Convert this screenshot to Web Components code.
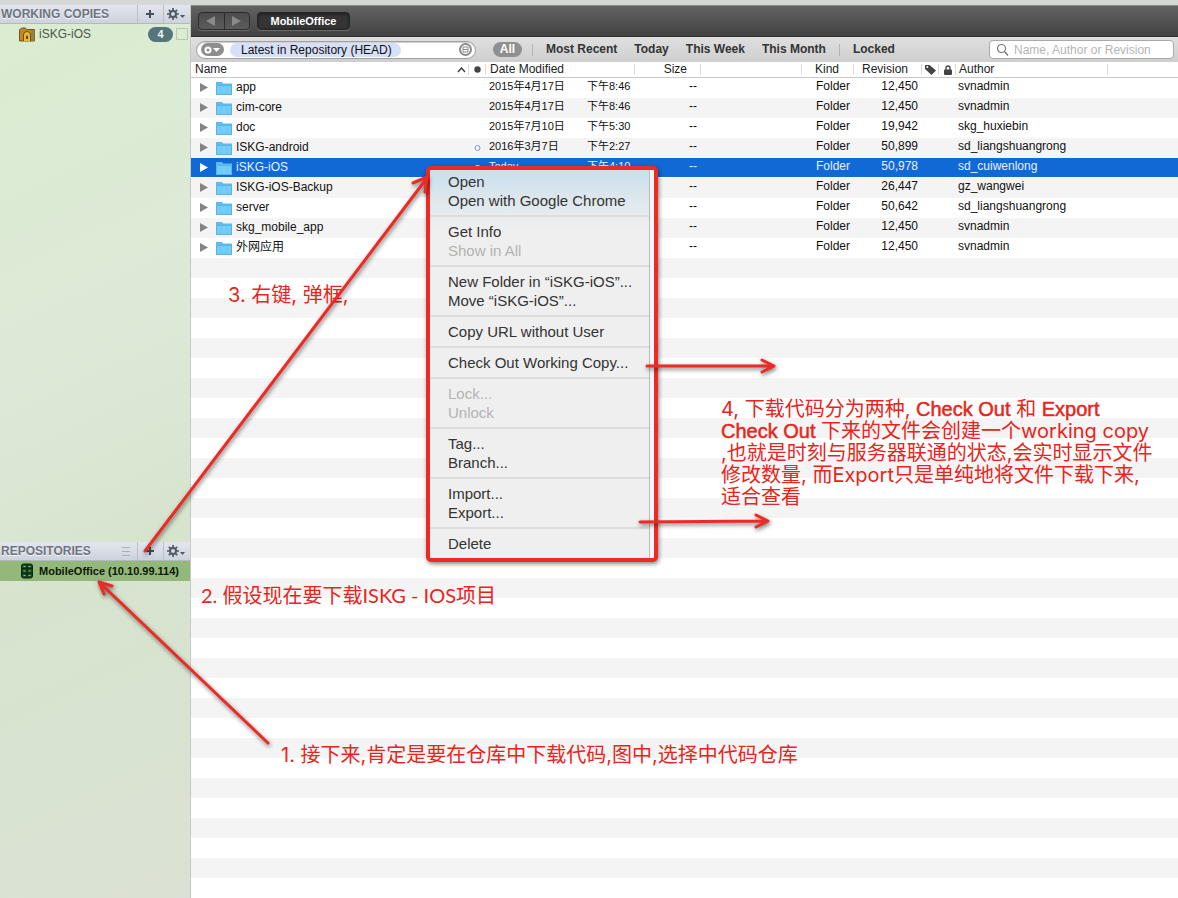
<!DOCTYPE html>
<html lang="zh-CN">
<head>
<meta charset="utf-8">
<title>MobileOffice</title>
<style>
html,body{margin:0;height:100%}
body{font:12px/16px "Liberation Sans","Noto Sans CJK SC",sans-serif;color:#111;background:#fff}
</style>
</head>
<body>
<svn-app></svn-app>
<script>
const define=(name,html,setup)=>customElements.define(name,class extends HTMLElement{
  constructor(){super();this.attachShadow({mode:'open'})}
  connectedCallback(){
    if(this.shadowRoot.childNodes.length)return;
    const t=document.createElement('template');
    t.innerHTML='<style>*{box-sizing:border-box}button{font:inherit;color:inherit;background:none;border:0;padding:0;margin:0}svg{display:block}</style>'+html;
    this.shadowRoot.append(t.content.cloneNode(true));
    if(setup)setup.call(this,this.shadowRoot);
  }
});

define('side-section',`
<style>
:host{display:flex;flex-direction:column;min-height:80px}
header{display:flex;height:19px;flex:none;padding-right:1px;border-bottom:1px solid #b4b9be;background:linear-gradient(#e3e6ee,#cdd3dc);color:#6c7580}
h2{flex:1;margin:0;padding-left:1px;font-size:12px;line-height:18px;font-weight:bold;text-shadow:0 1px #f4f6f9}
button{width:26px;padding-right:2px;display:grid;place-items:center;border-left:1px solid #b9bfc8}
.grip{width:22px;display:grid;place-items:center}
</style>
<header><h2></h2><span class="grip" hidden></span>
<button aria-label="Add"><svg width="10" height="10"><path d="M5 1v8M1 5h8" stroke="#434e5b" stroke-width="2"/></svg></button>
<button aria-label="Actions"><svg width="18" height="12"><g stroke="#4f5965" fill="none"><circle cx="6" cy="6" r="3" stroke-width="2"/><path d="M6 0v2.500M6 9.500V12M0 6h2.500M9.500 6H12M1.800 1.800l1.700 1.700M8.500 8.500l1.700 1.700M10.200 1.800L8.500 3.500M3.500 8.500l-1.700 1.700" stroke-width="1.700"/></g><path d="M13 7h5l-2.500 3z" fill="#4f5965"/></svg></button>
</header>
<slot></slot>`,function(r){
  r.querySelector('h2').textContent=this.getAttribute('heading');
  if(this.hasAttribute('grip')){
    const g=r.querySelector('.grip');g.hidden=false;
    g.innerHTML='<svg width="8" height="9"><path d="M0 .5h8M0 4.500h8M0 8.500h8" stroke="#a9b0b8"/></svg>';
  }else r.querySelector('.grip').remove();
});

define('side-item',`
<style>
:host{display:flex;align-items:center;height:20px;padding-left:19px;color:#4a5747}
:host([selected]){background:#94b77c;color:#0b1708;font-weight:bold;font-size:11px}
.icon{width:20px}
.label{flex:1;white-space:nowrap}
</style>
<span class="icon"><slot name="icon"></slot></span><span class="label"><slot></slot></span><slot name="end"></slot>`);

define('side-bar',`
<style>
:host{display:flex;flex-direction:column;background:linear-gradient(155deg,#dbecd0 0,#dde9d8 40%,#d6e4ce 62%,#dbe2d5 100%);border-right:1px solid #c3ccbf}
side-section:first-of-type{flex:537 1 0}
side-section:last-of-type{flex:356 1 0}
.end{display:flex;align-items:center;gap:3px;padding-right:2px}
.badge{width:25px;height:15px;border-radius:8px;background:#54757b;color:#eef5f5;font:bold 11px/15px "Liberation Sans",sans-serif;text-align:center}
input{appearance:none;width:12px;height:12px;margin:0;border:1px solid #b9c8b0;background:transparent}
</style>
<side-section heading="WORKING COPIES">
 <side-item>
  <svg slot="icon" width="16" height="15"><path d="M.5 2.500h1l1-1.500h4l1 1.500h8v11.500H.5z" fill="#b98a2c" stroke="#76571b"/><path d="M12 3h3.500v11H12z" fill="#8e8443"/><path d="M4.500 14V8a3.500 3.500 0 0 1 7 0v6" fill="#efb832" stroke="#73500f"/><path d="M7 12V9.500a1 1 0 0 1 2 0V12z" fill="#5d410d"/></svg>iSKG-iOS
  <span slot="end" class="end"><span class="badge">4</span><input type="checkbox" aria-label="Mark iSKG-iOS"></span>
 </side-item>
</side-section>
<side-section heading="REPOSITORIES" grip>
 <side-item selected>
  <svg slot="icon" width="16" height="16"><rect x="2.500" y="1" width="11" height="14" rx="2" fill="#174820" stroke="#0a2710"/><path d="M3 5.500h10M3 10h10M8 1v14" stroke="#082a0d"/><path d="M4.500 3.500h2M4.500 8h2M4.500 12.500h2M9.500 3.500h2M9.500 8h2M9.500 12.500h2" stroke="#8fc58c"/></svg>MobileOffice (10.10.99.114)
 </side-item>
</side-section>`);

define('nav-bar',`
<style>
:host{display:flex;align-items:center;gap:7px;height:32px;padding-left:7px;background:linear-gradient(#626262,#424242);border-top:1px solid #8c8c8c;border-bottom:1px solid #2e2e2e}
.pair{display:flex;width:52px;height:18px;border:1px solid #2c2c2c;border-radius:4px;background:linear-gradient(#4c4c4c,#5b5b5b);box-shadow:0 1px #6b6b6b}
.pair button{flex:1;display:grid;place-items:center}
.pair button+button{border-left:1px solid #2c2c2c}
.tab{width:93px;height:18px;border:1px solid #262626;border-radius:4px;background:#343434;box-shadow:inset 0 1px 3px #1b1b1b,0 1px #6b6b6b;color:#fff;font-weight:bold;font-size:11px;line-height:16px}
</style>
<div class="pair"><button aria-label="Back"><svg width="10" height="10"><path d="M9 0v10L0 5z" fill="#8a8a8a"/></svg></button><button aria-label="Forward"><svg width="10" height="10"><path d="M0 0v10l9-5z" fill="#8a8a8a"/></svg></button></div>
<button class="tab">MobileOffice</button>`);

define('filter-bar',`
<style>
:host{display:flex;align-items:center;height:25px;padding:0 4px 0 5px;background:linear-gradient(#dfdfdf,#cfcfcf);color:#333;font-weight:bold}
.scope{display:flex;align-items:center;width:280px;height:18px;padding:0 3px 0 4px;border:1px solid #a2a2a2;border-radius:9px;background:#fff;box-shadow:inset 0 1px 1px #ccc}
.gear{width:23px;height:13px;border-radius:7px;background:#8e8e8e;display:grid;place-items:center}
.token{height:14px;margin-left:6px;padding:0 9px 0 11px;border-radius:7px;background:#d6e0f8;color:#111;font-weight:normal;line-height:14px;white-space:nowrap}
.list{margin-left:auto}
i{width:1px;height:12px;background:#b3b3b3}
nav{display:flex;align-items:center;white-space:nowrap;flex:1;line-height:15px}
nav i{margin:0 13px 0 10px}
nav i:last-of-type{margin:0 13px}
nav button{margin-right:17px}
nav button.last{margin:0}
nav button.all{width:29px;height:15px;margin:0 0 0 17px;border-radius:8px;background:#8f8f8f;color:#fff}
label{display:flex;align-items:center;gap:5px;width:185px;height:19px;padding:0 6px;border:1px solid #a9a9a9;border-radius:4px;background:#fff}
input{flex:1;min-width:0;border:0;outline:0;padding:0;background:none;font:12px "Liberation Sans",sans-serif}
input::placeholder{color:#b5b5b5;opacity:1}
</style>
<div class="scope"><button class="gear" aria-label="Scope"><svg width="17" height="8"><circle cx="4" cy="4" r="2.500" fill="none" stroke="#fff" stroke-width="2"/><path d="M9 2h7l-3.500 4z" fill="#fff"/></svg></button><button class="token">Latest in Repository (HEAD)</button><button class="list" aria-label="Revisions"><svg width="13" height="13"><circle cx="6.500" cy="6.500" r="5.500" fill="#fff" stroke="#8b8b8b" stroke-width="2"/><path d="M4 4h5v5H4zM4 6.500h5" fill="none" stroke="#8b8b8b"/></svg></button></div>
<nav><button class="all">All</button><i></i><button>Most Recent</button><button>Today</button><button>This Week</button><button class="last">This Month</button><i></i><button>Locked</button></nav>
<label><svg width="13" height="13"><circle cx="5.500" cy="5.500" r="4" fill="none" stroke="#777" stroke-width="1.200"/><path d="M8.500 8.500l3.500 4" stroke="#777" stroke-width="1.400"/></svg><input aria-label="Search" placeholder="Name, Author or Revision"></label>`);

const rows=[
['app','','2015年4月17日','下午8:46','12,450','svnadmin'],
['cim-core','','2015年4月17日','下午8:46','12,450','svnadmin'],
['doc','','2015年7月10日','下午5:30','19,942','skg_huxiebin'],
['ISKG-android','open','2016年3月7日','下午2:27','50,899','sd_liangshuangrong'],
['iSKG-iOS','dot','Today','下午4:10','50,978','sd_cuiwenlong'],
['ISKG-iOS-Backup','','','','26,447','gz_wangwei'],
['server','','','','50,642','sd_liangshuangrong'],
['skg_mobile_app','','','','12,450','svnadmin'],
['外网应用','','','','12,450','svnadmin']];
define('repo-table',`
<style>
:host{display:block;flex:1;background:repeating-linear-gradient(#fff 0 20px,#f4f4f4 20px 40px) 0 16px}
table{width:100%;border-collapse:separate;border-spacing:0;table-layout:fixed;line-height:15px}
th,td{padding:0;text-align:left;white-space:nowrap;font-weight:normal}
thead tr{height:16px;background:#fff}
th{height:16px;border-bottom:1px solid #c9c9c9;color:#222;background:linear-gradient(#ddd,#ddd) right center/1px 11px no-repeat}
th:last-child{background:none}
tbody tr{height:20px}
td{vertical-align:top;padding-top:1px}
.sel td{background:#1169d6;border-bottom:1px solid #fff;color:#e8f1ff}
.name{padding-left:4px}
.name span{display:flex;justify-content:space-between;align-items:center;padding-right:3px}
.item{display:flex;align-items:center;height:19px;padding-left:9px}
.item svg:first-child{margin-right:8px}
.item svg:nth-child(2){margin-right:4px}
.c{text-align:center}.c svg{margin:auto}
th.date{padding-left:4px}
td.date{padding-left:3px;font-size:11px}
td.date span{display:inline-block;width:98px}
.size{text-align:right;padding-right:14px}
td.size{padding-right:4px}
.kind{padding-left:13px}
td.kind{padding-left:14px}
.rev{text-align:right;padding-right:14px}
td.rev{padding-right:4px}
th.author{padding-left:3px}
td.author{padding-left:2px}
</style>
<table>
<colgroup><col style="width:278px"><col style="width:17px"><col style="width:149px"><col style="width:66px"><col style="width:101px"><col style="width:52px"><col style="width:68px"><col style="width:17px"><col style="width:17px"><col style="width:152px"><col></colgroup>
<thead><tr><th class="name"><span>Name<svg width="9" height="6"><path d="M1 5l3.500-4L8 5" fill="none" stroke="#444" stroke-width="1.500"/></svg></span></th>
<th class="c" aria-label="Status"><svg width="7" height="7"><circle cx="3.500" cy="3.500" r="3.200" fill="#444"/></svg></th>
<th class="date">Date Modified</th><th class="size">Size</th><th></th><th class="kind">Kind</th><th class="rev">Revision</th>
<th class="c" aria-label="Tags"><svg width="11" height="11"><path d="M0 1h4.500L11 6.500 6.500 11 0 5z" fill="#444"/><circle cx="2.300" cy="3" r="1" fill="#fff"/></svg></th>
<th class="c" aria-label="Lock"><svg width="8" height="10"><path d="M2 5V3a2 2 0 0 1 4 0v2" fill="none" stroke="#444" stroke-width="1.400"/><rect y="4.500" width="8" height="5.500" rx="1" fill="#444"/></svg></th>
<th class="author">Author</th><th></th></tr></thead>
<tbody></tbody></table>`,function(r){
  r.querySelector('tbody').innerHTML=rows.map(([n,s,d,t,v,a])=>{
    const sel=n==='iSKG-iOS';
    const mark=s==='open'?'<svg width="7" height="18"><circle cx="3.500" cy="9" r="2.500" fill="none" stroke="#8b8fd0"/></svg>':s==='dot'?'<svg width="7" height="18"><circle cx="3.500" cy="9" r="3" fill="#d5e6ff"/></svg>':'';
    return `<tr class="${sel?'sel':''}"><td style="padding-top:0"><div class="item"><svg width="8" height="9"><path d="M0 0v9l8-4.500z" fill="${sel?'#fff':'#848484'}"/></svg><svg width="16" height="14"><path d="M0 1h6l1 1.500h9V14H0z" fill="#5cbcee"/><path d="M.5 4.500h15v9H.5z" fill="#71cdf8" stroke="#58b5e6"/></svg>${n}</div></td><td class="c">${mark}</td><td class="date"><span>${d}</span>${t}</td><td class="size">--</td><td></td><td class="kind">Folder</td><td class="rev">${v}</td><td></td><td></td><td class="author">${a}</td><td></td></tr>`;
  }).join('');
});

define('context-menu',`
<style>
:host{display:block;border:4px solid #ee2a24;border-radius:5px;background:#f3f5f6;box-shadow:1px 2px 4px #0007;padding-right:4px;color:#333;font-size:15px;line-height:19px}
[role=menu]{padding:2px 0 5px;background:linear-gradient(#c8dfee 0,#dde7ec 28px,#efefef 60px);border-right:1px solid #b5bcc6}
button{display:block;width:100%;height:19px;padding-left:18px;text-align:left;white-space:nowrap}
button:disabled{color:#b3b3b3}
hr{height:2px;margin:5px 0;border:0;background:#dcdcdc}
</style>
<div role="menu"></div>`,function(r){
  const groups=[['Open','Open with Google Chrome'],['Get Info','-Show in All'],['New Folder in “iSKG-iOS”...','Move “iSKG-iOS”...'],['Copy URL without User'],['Check Out Working Copy...'],['-Lock...','-Unlock'],['Tag...','Branch...'],['Import...','Export...'],['Delete']];
  r.querySelector('[role=menu]').innerHTML=groups.map(g=>g.map(t=>t[0]==='-'?`<button role="menuitem" disabled>${t.slice(1)}</button>`:`<button role="menuitem">${t}</button>`).join('')).join('<hr>');
});

define('note-layer',`
<style>
:host{display:block;pointer-events:none;color:#e8251c;font:20px/22px Inter,"Noto Sans CJK SC",sans-serif}
svg{position:absolute;left:0;top:0;overflow:visible;filter:drop-shadow(1px 2px 2px #0008)}
p{position:absolute;margin:0;white-space:nowrap}
b{font:20px/22px "Liberation Sans",sans-serif;-webkit-text-stroke:.5px}
.light{font-family:Lato,"Noto Sans CJK SC",sans-serif}
</style>
<p style="left:228px;top:284px">3. 右键, 弹框,</p>
<p class="light" style="left:201px;top:584px">2. 假设现在要下载ISKG - IOS项目</p>
<p style="left:281px;top:744px">1. 接下来,肯定是要在仓库中下载代码,图中,选择中代码仓库</p>
<p style="left:721px;top:398px">4, 下载代码分为两种, <b>Check Out</b> 和 <b>Export</b><br><b>Check Out</b> 下来的文件会创建一个working copy<br>,也就是时刻与服务器联通的状态,会实时显示文件<br>修改数量, 而Export只是单纯地将文件下载下来,<br>适合查看</p>
<svg width="800" height="760" fill="none" stroke="#ee2a24" stroke-width="3" stroke-linecap="round" stroke-linejoin="round">
<path d="M268 743L100 583M104 594L99 582L112 586" />
<path d="M145 551L427 178M413 183L427 177L425 192"/>
<path d="M647 366H773M762 360l12 6l-12 6"/>
<path d="M640 522L767 521M756 515l12 6l-12 6"/>
</svg>`);

define('svn-app',`
<style>
:host{display:grid;grid-template:5px 1fr/191px minmax(0,1fr);min-height:100vh;position:relative;overflow:hidden}
.edge{grid-column:1/-1;background:#d6d8d5}
main{display:flex;flex-direction:column}
context-menu{position:absolute;left:426px;top:166px;width:232px}
note-layer{position:absolute;left:0;top:0}
</style>
<div class="edge"></div><side-bar></side-bar>
<main><nav-bar></nav-bar><filter-bar></filter-bar><repo-table></repo-table></main>
<context-menu></context-menu><note-layer></note-layer>`);
</script>
</body>
</html>
